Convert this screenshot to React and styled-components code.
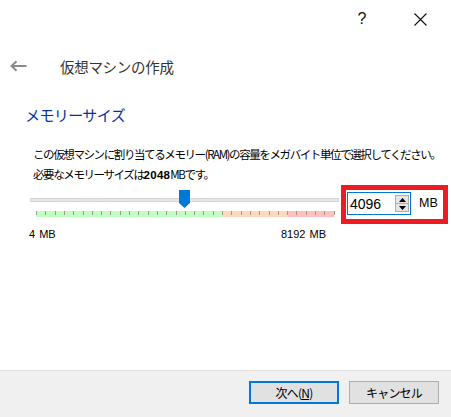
import React from 'react'
import styled, { createGlobalStyle } from 'styled-components'

const GlobalStyle = createGlobalStyle`
  html, body {
    margin: 0;
    padding: 0;
    background: #ffffff;
  }
  body {
    font-family: "Noto Sans CJK JP", "Liberation Sans", sans-serif;
    color: #000;
  }
`

const Window = styled.div`
  width: 451px;
  height: 417px;
  display: flex;
  flex-direction: column;
  background: #fff;
  overflow: hidden;
`

const TitleBar = styled.div`
  height: 38px;
  display: flex;
  justify-content: flex-end;
  align-items: center;
`

const CaptionButton = styled.div`
  width: 58px;
  height: 38px;
  display: flex;
  align-items: center;
  justify-content: center;
  font-family: "Liberation Sans", sans-serif;
  font-size: 16px;
  color: #111;
  margin-right: ${p => p.$mr || 0}px;
`

const Header = styled.div`
  display: flex;
  align-items: center;
  height: 20px;
  margin-top: 18px;
  padding-left: 10px;
`

const Title = styled.div`
  margin-left: 33px;
  font-size: 14.5px;
  color: #333;
  letter-spacing: -0.3px;
`

const Body = styled.div`
  padding-left: 25px;
  display: flex;
  flex-direction: column;
`

const Heading = styled.div`
  margin-top: 29px;
  font-size: 15px;
  color: #0033a0;
  letter-spacing: -0.6px;
  line-height: 20px;
`

const Description = styled.div`
  margin-top: 20px;
  padding-left: 8px;
  font-size: 11.5px;
  line-height: 19.5px;
  letter-spacing: -1.4px;
  b {
    font-family: "Liberation Sans", sans-serif;
    font-weight: 700;
    letter-spacing: 0.3px;
  }
`

const SliderRow = styled.div`
  display: flex;
  align-items: flex-start;
  margin-top: 0px;
  padding-left: 5px;
`

const Slider = styled.div`
  position: relative;
  width: 309px;
  height: 32px;
  padding-top: 13px;
  box-sizing: border-box;
`

const Groove = styled.div`
  height: 4px;
  background: #e7e7e7;
  border: 1px solid #d6d6d6;
  box-sizing: border-box;
`

const TickBar = styled.div`
  margin: 9px 0 0 6px;
  width: 298px;
  height: 6px;
  display: flex;
`

const Zone = styled.div`
  flex: 0 0 ${p => p.$w}px;
  background: ${p => p.$c};
`

const Ticks = styled.svg`
  position: absolute;
  left: 6px;
  top: 26px;
`

const Thumb = styled.svg`
  position: absolute;
  left: 149px;
  top: 5px;
`

const Highlight = styled.div`
  margin-left: 2px;
  width: 107px;
  height: 39px;
  border: 5px solid #ed1c24;
  box-sizing: border-box;
  display: flex;
  align-items: flex-start;
  padding: 2px 0 0 1px;
`

const SpinBox = styled.div`
  width: 64px;
  height: 23px;
  border: 1px solid #0078d7;
  box-sizing: border-box;
  display: flex;
  align-items: center;
  justify-content: space-between;
  padding: 0 1px 0 2px;
  font-family: "Liberation Sans", sans-serif;
  font-size: 14px;
`

const Spinner = styled.div`
  width: 14px;
  height: 17px;
  border: 1px solid #adadad;
  background: #e5e5e5;
  box-sizing: border-box;
  display: flex;
  flex-direction: column;
`

const SpinHalf = styled.div`
  flex: 1;
  display: flex;
  align-items: center;
  justify-content: center;
  border-top: ${p => (p.$top ? '1px solid #adadad' : 'none')};
`

const Unit = styled.div`
  margin: 4px 0 0 8px;
  font-family: "Liberation Sans", sans-serif;
  font-size: 12.5px;
`

const Labels = styled.div`
  display: flex;
  width: 297px;
  margin: 4px 0 0 4px;
  justify-content: space-between;
  font-family: "Liberation Sans", sans-serif;
  font-size: 11px;
  word-spacing: 1px;
`

const Footer = styled.div`
  margin-top: auto;
  height: 47px;
  background: #f0f0f0;
  border-top: 1px solid #dfdfdf;
  box-sizing: border-box;
  display: flex;
  justify-content: flex-end;
  align-items: flex-start;
  padding: 10px 12px 0 0;
  gap: 10px;
`

const Button = styled.div`
  width: 90px;
  height: 23px;
  box-sizing: border-box;
  background: #e1e1e1;
  border: ${p => (p.$primary ? '2px solid #0078d7' : '1px solid #adadad')};
  display: flex;
  align-items: center;
  justify-content: center;
  font-size: 12px;
  letter-spacing: -0.8px;
  color: #000;
  u {
    text-decoration: underline;
  }
`

const TICKS = Array.from({ length: 33 }, (_, i) => Math.round(i * 9.3))

export default function App() {
  return (
    <>
      <GlobalStyle />
      <Window>
        <TitleBar>
          <CaptionButton>?</CaptionButton>
          <CaptionButton $mr={2}>
            <svg width="13" height="13" viewBox="0 0 13 13">
              <path d="M0.5 0.5 L12.5 12.5 M12.5 0.5 L0.5 12.5" stroke="#111" strokeWidth="1.1" fill="none" />
            </svg>
          </CaptionButton>
        </TitleBar>
        <Header>
          <svg width="17" height="12" viewBox="0 0 17 12">
            <path d="M16.5 6 H2 M6.5 1.2 L1.5 6 L6.5 10.8" stroke="#8a8a8a" strokeWidth="2" fill="none" />
          </svg>
          <Title>仮想マシンの作成</Title>
        </Header>
        <Body>
          <Heading>メモリーサイズ</Heading>
          <Description>
            この仮想マシンに割り当てるメモリー(RAM)の容量をメガバイト単位で選択してください。
            <br />
            必要なメモリーサイズは<b>2048</b>MBです。
          </Description>
          <SliderRow>
            <Slider>
              <Groove />
              <TickBar>
                <Zone $w={187} $c="#c0ffc0" />
                <Zone $w={65} $c="#ffd8c0" />
                <Zone $w={46} $c="#ffc0c0" />
              </TickBar>
              <Ticks width="300" height="6">
                {TICKS.map(x => (
                  <rect key={x} x={x} y="0" width="1" height="4" fill="#a09890" />
                ))}
              </Ticks>
              <Thumb width="11" height="18" viewBox="0 0 11 18">
                <path d="M0 0 H11 V13 L5.5 18 L0 13 Z" fill="#0078d7" />
              </Thumb>
            </Slider>
            <Highlight>
              <SpinBox>
                <span>4096</span>
                <Spinner>
                  <SpinHalf>
                    <svg width="7" height="4" viewBox="0 0 7 4"><path d="M3.5 0 L7 4 H0 Z" fill="#000" /></svg>
                  </SpinHalf>
                  <SpinHalf $top>
                    <svg width="7" height="4" viewBox="0 0 7 4"><path d="M0 0 H7 L3.5 4 Z" fill="#000" /></svg>
                  </SpinHalf>
                </Spinner>
              </SpinBox>
              <Unit>MB</Unit>
            </Highlight>
          </SliderRow>
          <Labels>
            <span>4 MB</span>
            <span>8192 MB</span>
          </Labels>
        </Body>
        <Footer>
          <Button $primary>次へ(<u>N</u>)</Button>
          <Button>キャンセル</Button>
        </Footer>
      </Window>
    </>
  )
}
